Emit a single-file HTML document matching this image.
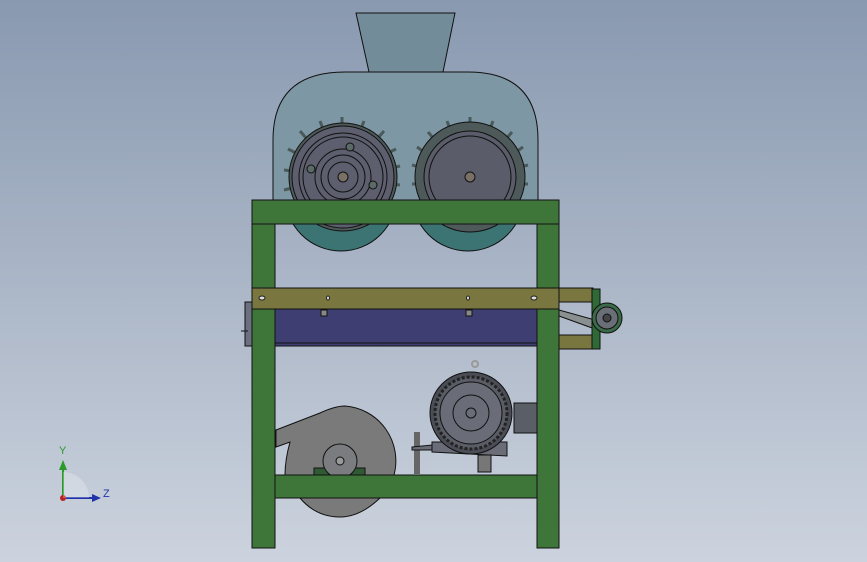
<!DOCTYPE html>
<html><head><style>
html,body{margin:0;padding:0;width:867px;height:562px;overflow:hidden}
body{background:linear-gradient(#8999b0,#ccd3de)}
svg{position:absolute;left:0;top:0}
</style></head><body>
<svg width="867" height="562" viewBox="0 0 867 562" stroke="#111" stroke-width="1">
<defs><clipPath id="lo"><rect x="0" y="200" width="867" height="100"/></clipPath></defs>
<!-- hopper -->
<polygon points="356,13 455,13 443,72 369,72" fill="#728c99"/>
<!-- housing -->
<path d="M273,200 L273,140 Q273,72 345,72 L468,72 Q538,72 538,140 L538,200 Z" fill="#7d97a4"/>
<!-- teal lower halves -->
<g clip-path="url(#lo)">
<circle cx="341" cy="195" r="56" fill="#3b7472"/>
<circle cx="468" cy="195" r="56" fill="#3b7472"/>
</g>
<!-- teeth -->
<g stroke="#4a5a5a" stroke-width="3">
<line x1="342" y1="117" x2="342" y2="126"/><line x1="320" y1="121" x2="323" y2="129"/><line x1="364" y1="121" x2="361" y2="129"/>
<line x1="300" y1="131" x2="306" y2="138"/><line x1="384" y1="131" x2="378" y2="138"/><line x1="288" y1="149" x2="296" y2="153"/>
<line x1="396" y1="149" x2="388" y2="153"/><line x1="284" y1="170" x2="292" y2="171"/><line x1="400" y1="166" x2="392" y2="168"/>
<line x1="284" y1="190" x2="292" y2="188"/><line x1="400" y1="185" x2="392" y2="184"/>
<line x1="470" y1="117" x2="470" y2="126"/><line x1="447" y1="121" x2="450" y2="129"/><line x1="493" y1="121" x2="490" y2="129"/>
<line x1="428" y1="132" x2="434" y2="139"/><line x1="512" y1="132" x2="506" y2="139"/><line x1="417" y1="147" x2="424" y2="152"/>
<line x1="523" y1="147" x2="516" y2="152"/><line x1="412" y1="165" x2="420" y2="167"/><line x1="528" y1="165" x2="520" y2="167"/>
<line x1="528" y1="184" x2="520" y2="184"/><line x1="412" y1="184" x2="420" y2="184"/>
</g>
<!-- left wheel -->
<circle cx="343" cy="177" r="54" fill="#4e5a5a"/>
<circle cx="343" cy="177" r="51" fill="#5d5e6e"/>
<circle cx="343" cy="177" r="44" fill="none"/>
<circle cx="343" cy="177" r="40" fill="none"/>
<circle cx="343" cy="177" r="28" fill="none"/>
<circle cx="343" cy="177" r="22" fill="none"/>
<circle cx="343" cy="177" r="15" fill="none"/>
<circle cx="343" cy="177" r="5" fill="#7a7066"/>
<circle cx="350" cy="147" r="4" fill="#5a6a66"/>
<circle cx="311" cy="169" r="4" fill="#5a6a66"/>
<circle cx="373" cy="185" r="4" fill="#5a6a66"/>
<circle cx="334" cy="208" r="4" fill="#3f8a3c"/>
<!-- right wheel -->
<circle cx="470" cy="177" r="55" fill="#4e5a5a"/>
<circle cx="470" cy="177" r="46" fill="#5a5c6a"/>
<circle cx="470" cy="177" r="41" fill="none"/>
<circle cx="470" cy="177" r="5" fill="#7a7066"/>
<!-- frame -->
<rect x="252" y="200" width="307" height="24" fill="#3e7539"/>
<rect x="252" y="224" width="23" height="324" fill="#3e7539"/>
<rect x="537" y="224" width="22" height="324" fill="#3e7539"/>
<!-- conveyor -->
<rect x="245" y="302" width="7" height="44" fill="#6a7080"/>
<line x1="241" y1="331" x2="248" y2="331"/>
<rect x="275" y="309" width="262" height="37" fill="#3f3e72"/>
<line x1="275" y1="343" x2="537" y2="343"/>
<rect x="252" y="288" width="307" height="21" fill="#7a7640"/>
<rect x="559" y="288" width="34" height="14" fill="#7a7640"/>
<rect x="559" y="335" width="34" height="14" fill="#7a7640"/>
<polygon points="559,310 595,320 595,329 559,316" fill="#8a8f90"/>
<rect x="592" y="289" width="8" height="60" fill="#2f6a36"/>
<circle cx="607" cy="318" r="15" fill="#3a6a48"/>
<circle cx="607" cy="318" r="11" fill="#6a6e76"/>
<circle cx="607" cy="318" r="4" fill="#444"/>
<g fill="#ddd" stroke="#222"><ellipse cx="262" cy="298" rx="3" ry="2"/><ellipse cx="328" cy="298" rx="1.5" ry="2"/><ellipse cx="468" cy="298" rx="1.5" ry="2"/><ellipse cx="534" cy="298" rx="3" ry="2"/></g>
<rect x="321" y="310" width="6" height="6" fill="#888"/><rect x="466" y="310" width="6" height="6" fill="#888"/>
<!-- blower -->
<path d="M276,430 L320,413 Q335,406 345,406 A55,55 0 0 1 394,475 L285,475 Q285,460 290,442 L276,447 Z" fill="#7a7a7a"/>
<path d="M300,498 L380,498 Q360,517 340,517 Q316,517 300,498 Z" fill="#7a7a7a"/>
<rect x="314" y="468" width="51" height="8" fill="#2f5a34"/>
<circle cx="340" cy="461" r="17" fill="#7a7c80"/>
<circle cx="340" cy="461" r="4" fill="#999"/>
<!-- motor -->
<rect x="414" y="432" width="6" height="42" fill="#666" stroke="none"/>
<polygon points="412,447 432,445 432,450 412,450" fill="#6a6d78"/>
<polygon points="432,442 507,442 507,456 432,452" fill="#6a6d78"/>
<rect x="478" y="455" width="13" height="17" fill="#777"/>
<circle cx="475" cy="364" r="3" fill="none" stroke="#999" stroke-width="2"/>
<circle cx="471" cy="413" r="41" fill="#4a4d56"/>
<circle cx="471" cy="413" r="36" fill="#5a5d66" stroke-dasharray="3 2" stroke-width="3" stroke="#222"/>
<circle cx="471" cy="413" r="31" fill="#6a6d78"/>
<circle cx="471" cy="413" r="18" fill="none"/>
<circle cx="471" cy="413" r="5" fill="none"/>
<rect x="514" y="403" width="23" height="30" fill="#5a5e66"/>
<!-- lower beam -->
<rect x="275" y="475" width="262" height="23" fill="#3e7539"/>
<!-- axes -->
<g stroke-width="2">
<line x1="63" y1="498" x2="63" y2="467" stroke="#2a9a2a"/>
<polygon points="59,470 67,470 63,460" fill="#2a9a2a" stroke="none"/>
<line x1="63" y1="498" x2="94" y2="498" stroke="#2233aa"/>
<polygon points="92,494 92,502 101,498" fill="#2233aa" stroke="none"/>
<circle cx="63" cy="498" r="3" fill="#b22" stroke="none"/>
<path d="M63,498 L63,472 A26,26 0 0 1 89,498 Z" fill="rgba(255,255,255,0.25)" stroke="none"/>
</g>
<g font-family="Liberation Sans,sans-serif" font-size="11" stroke="none">
<text x="59" y="454" fill="#2a9a2a">Y</text>
<text x="103" y="497" fill="#2233aa">Z</text>
</g>
</svg>
</body></html>
